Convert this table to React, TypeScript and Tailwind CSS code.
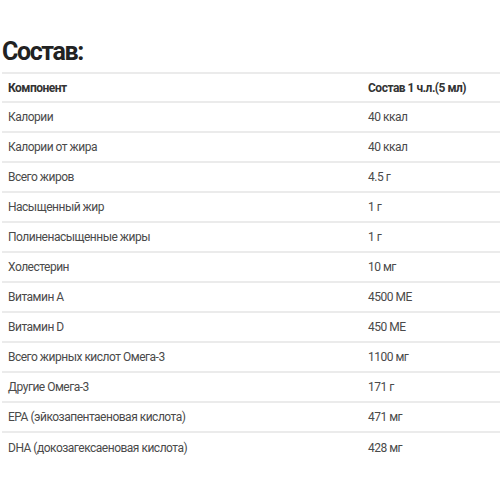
import React from "react";

const rows: [string, string][] = [
  ["Калории", "40 ккал"],
  ["Калории от жира", "40 ккал"],
  ["Всего жиров", "4.5 г"],
  ["Насыщенный жир", "1 г"],
  ["Полиненасыщенные жиры", "1 г"],
  ["Холестерин", "10 мг"],
  ["Витамин A", "4500 МЕ"],
  ["Витамин D", "450 МЕ"],
  ["Всего жирных кислот Омега-3", "1100 мг"],
  ["Другие Омега-3", "171 г"],
  ["EPA (эйкозапентаеновая кислота)", "471 мг"],
  ["DHA (докозагексаеновая кислота)", "428 мг"],
];

export default function App() {
  return (
    <div className="w-[500px] h-[500px] bg-white pl-[2px] pt-[37px] font-['Roboto',sans-serif]">
      <h2 className="text-[25px] leading-[30px] font-bold text-[#222] tracking-[-1.4px] mb-[5px]">
        Состав:
      </h2>
      <table className="w-full border-collapse text-[12px] tracking-[-0.5px]">
        <thead>
          <tr className="border-t-2 border-b-2 border-[#ebebeb]">
            <th className="w-[358px] h-[29px] pl-[6px] text-left font-bold text-[#333]">Компонент</th>
            <th className="pl-[8px] text-left font-bold text-[#333]">Состав 1 ч.л.(5 мл)</th>
          </tr>
        </thead>
        <tbody>
          {rows.map(([name, value], i) => (
            <tr
              key={name}
              className={i < rows.length - 1 ? "border-b-2 border-[#ebebeb]" : ""}
            >
              <td className="h-[30px] pl-[6px] text-[#4a4a4a]">{name}</td>
              <td className="pl-[8px] text-[#4a4a4a]">{value}</td>
            </tr>
          ))}
        </tbody>
      </table>
    </div>
  );
}
